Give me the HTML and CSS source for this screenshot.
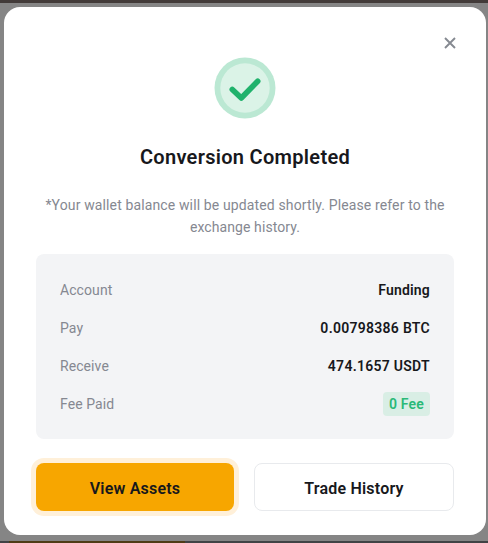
FILE: index.html
```html
<!DOCTYPE html>
<html lang="en">
<head>
<meta charset="utf-8">
<title>Conversion Completed</title>
<link rel="stylesheet" href="styles.css">
</head>
<body>
<div class="page-top"></div>
<main class="dialog">
  <button class="close" aria-label="Close"><svg width="12" height="12" viewBox="0 0 12 12"><path d="M1 1l10 10M11 1L1 11"/></svg></button>
  <svg class="status" width="62" height="62" viewBox="0 0 62 62"><circle class="ring" cx="31" cy="31" r="30.5"/><circle class="disc" cx="31" cy="31" r="24.7"/><path class="tick" d="M18.3 32.4L27.3 41L43.7 24.3"/></svg>
  <h1 class="title">Conversion Completed</h1>
  <p class="note"><span class="line-a">*Your wallet balance will be updated shortly. Please refer to the</span><br><span class="line-b">exchange history.</span></p>
  <dl class="details">
    <div class="row"><dt>Account</dt><dd>Funding</dd></div>
    <div class="row"><dt>Pay</dt><dd class="amount">0.00798386 BTC</dd></div>
    <div class="row"><dt>Receive</dt><dd class="amount">474.1657 USDT</dd></div>
    <div class="row"><dt>Fee Paid</dt><dd class="fee">0 Fee</dd></div>
  </dl>
  <div class="actions">
    <button class="button primary">View Assets</button>
    <button class="button secondary">Trade History</button>
  </div>
</main>
<div class="page-bottom"><div class="page-accent"></div></div>
</body>
</html>
```

FILE: styles.css
```css
* { box-sizing: border-box; }
body {
  margin: 0;
  height: 543px;
  overflow: hidden;
  display: flex;
  flex-direction: column;
  background: #858585;
  font-family: Roboto, "Liberation Sans", sans-serif;
  color: #17181c;
}
.page-top { height: 3px; margin-bottom: 4px; background: #423b39; }
.dialog {
  position: relative;
  width: 482px;
  height: 528px;
  margin-left: 4px;
  padding: 50px 32px 24px;
  border-radius: 16px;
  background: #fff;
  display: flex;
  flex-direction: column;
}
button { font: inherit; color: inherit; }
.close {
  position: absolute;
  top: 30px;
  right: 30px;
  width: 12px;
  height: 12px;
  padding: 0;
  border: 0;
  background: none;
}
.close svg { display: block; }
.close path { fill: none; stroke: #858991; stroke-width: 1.9; }
.status { display: block; flex: none; align-self: center; }
.ring { fill: #bbe8d3; }
.disc { fill: #dbf3e7; }
.tick { fill: none; stroke: #20b26c; stroke-width: 5.6; stroke-linecap: round; stroke-linejoin: round; }
.title {
  margin: 22px 0 0;
  height: 32px;
  line-height: 32px;
  font-size: 20px;
  font-weight: 600;
  text-align: center;
  white-space: nowrap;
  letter-spacing: .3px;
}
.note {
  margin: 21px 0 0;
  line-height: 22px;
  font-size: 14px;
  color: #858891;
  text-align: center;
  white-space: nowrap;
}
.line-a { letter-spacing: .13px; }
.line-b { letter-spacing: .09px; }
.details {
  margin: 16px 0 0;
  height: 185px;
  padding: 24px;
  border-radius: 8px;
  background: #f3f4f6;
  display: flex;
  flex-direction: column;
  gap: 14px;
  font-size: 14px;
}
.row { height: 24px; display: flex; justify-content: space-between; align-items: center; line-height: 24px; }
dt { color: #858891; letter-spacing: .08px; }
dd { margin: 0; font-weight: 600; letter-spacing: .18px; }
.amount { letter-spacing: .28px; }
.fee { padding: 0 6px; border-radius: 4px; background: #d9eee5; color: #2bb978; }
.actions { margin-top: 24px; display: grid; grid-template-columns: 198px 200px; gap: 20px; }
.button { height: 48px; padding: 2px 0 0; border: 0; border-radius: 8px; font-size: 16px; font-weight: 600; letter-spacing: .2px; }
.primary { background: #f7a600; box-shadow: 0 0 0 5px #fff0d9; }
.secondary { background: #fff; border: 1.5px solid #e8eaed; }
.page-bottom { height: 2px; margin-top: 6px; padding-left: 9px; background: #414345; }
.page-accent { width: 176px; height: 2px; background: #4f3c16; }
```
